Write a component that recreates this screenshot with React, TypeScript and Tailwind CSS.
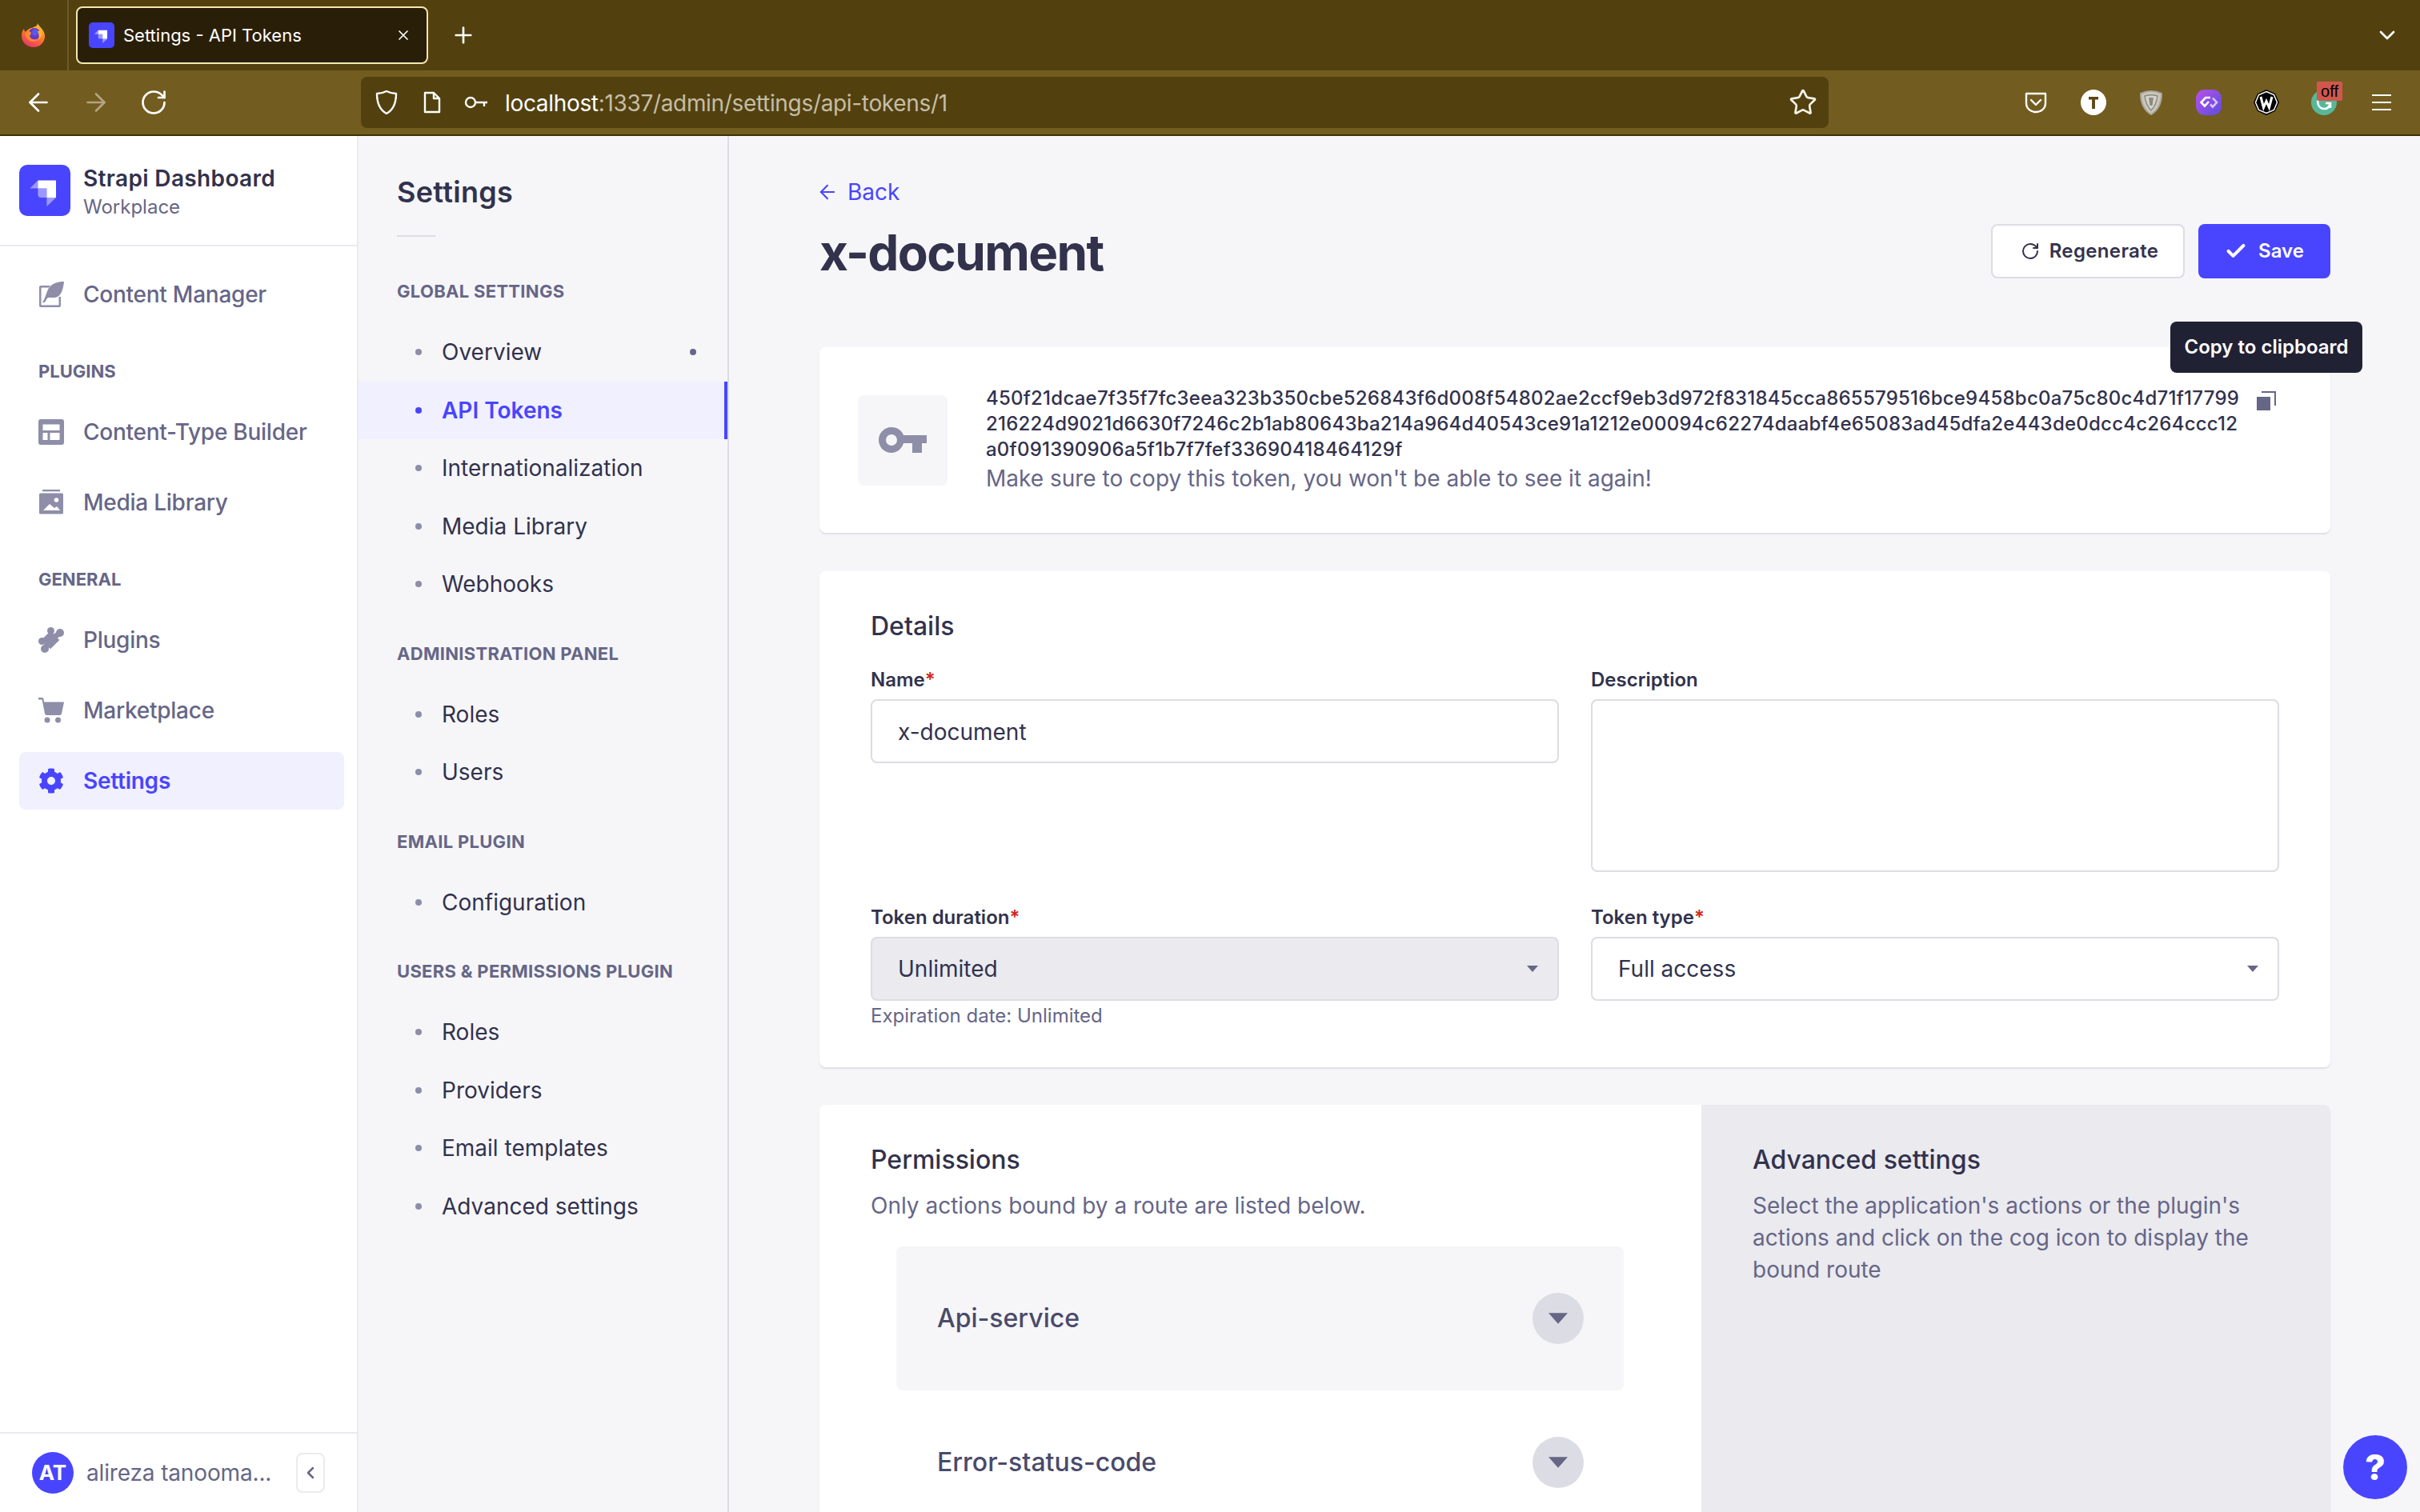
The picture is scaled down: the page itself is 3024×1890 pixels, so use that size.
import { ArrowLeft, ArrowRight, Check, ChevronDown, ChevronLeft, Plus, RotateCw, Star, X } from 'lucide-react';
import type { ReactNode } from 'react';
import { FaCog } from 'react-icons/fa';

const TOKEN_LINES = [
  '450f21dcae7f35f7fc3eea323b350cbe526843f6d008f54802ae2ccf9eb3d972f831845cca865579516bce9458bc0a75c80c4d71f17799',
  '216224d9021d6630f7246c2b1ab80643ba214a964d40543ce91a1212e00094c62274daabf4e65083ad45dfa2e443de0dcc4c264ccc12',
  'a0f091390906a5f1b7f7fef33690418464129f',
];

const SETTINGS_GROUPS = [
  { title: 'Global Settings', items: ['Overview', 'API Tokens', 'Internationalization', 'Media Library', 'Webhooks'] },
  { title: 'Administration Panel', items: ['Roles', 'Users'] },
  { title: 'Email Plugin', items: ['Configuration'] },
  { title: 'Users & Permissions Plugin', items: ['Roles', 'Providers', 'Email templates', 'Advanced settings'] },
];

function StrapiLogo({ className }: { className: string }) {
  return (
    <svg viewBox="0 0 32 32" className={className}>
      <rect width="32" height="32" rx="5" fill="#4945ff" />
      <path d="M11.7 9.700H23V20.500H17.200V14.700H11.700Z" fill="#fff" />
      <path d="M6.700 14.700L11.700 9.700V14.700ZM11.700 14.700H17.200V20.500H13.700A2 2 0 0 1 11.700 18.500Z" fill="#fff" opacity="0.45" />
      <path d="M17.200 20.500H23L17.200 26Z" fill="#fff" opacity="0.45" />
    </svg>
  );
}

function FirefoxLogo() {
  return (
    <svg viewBox="0 0 32 32" className="h-8 w-8">
      <defs>
        <linearGradient id="ff-body" x1="0.8" y1="0" x2="0.3" y2="1">
          <stop offset="0" stopColor="#ffd02e" />
          <stop offset="0.5" stopColor="#ff7a2a" />
          <stop offset="1" stopColor="#e8326e" />
        </linearGradient>
      </defs>
      <path d="M21 1c1 4 9 8 9 16 0 8-6 14-14 14S1 25 1 17c0-4 1-7 3-9 0 2 1 3 2 4 2-3 5-5 8-5 3-2 7-2 7-6z" fill="url(#ff-body)" />
      <circle cx="17" cy="14.500" r="7.500" fill="#6a35d0" />
      <circle cx="18" cy="12.500" r="4" fill="#5a5ae8" />
      <path d="M6 12c3-2 6-1 7 1 0 2-2 3-2 4 1 4 6 6 11 3-2 4-7 5-11 3-4-2-6-7-5-11z" fill="#ff8b2c" />
      <path d="M25 8c2 5 1 11-3 14 1-4 1-8-1-11 2 0 3-1 4-3z" fill="#ffb52e" />
    </svg>
  );
}

function ChromeIcon({ children }: { children: ReactNode }) {
  return <div className="flex h-8 w-[72px] items-center justify-center">{children}</div>;
}

function ExtensionIcons() {
  return (
    <div className="ml-[223px] flex items-center">
      <ChromeIcon>
        <svg viewBox="0 0 32 32" className="h-8 w-8" fill="none" stroke="#fff" strokeWidth="2.4">
          <path d="M4 5h24v12c0 7-6 11-12 11S4 24 4 17z" strokeLinejoin="round" />
          <path d="M10 13l6 6 6-6" strokeLinecap="round" strokeLinejoin="round" />
        </svg>
      </ChromeIcon>
      <ChromeIcon>
        <svg viewBox="0 0 32 32" className="h-8 w-8">
          <circle cx="16" cy="16" r="16" fill="#fff" />
          <path d="M10 9h12v3.4h-4.1V24h-3.8V12.4H10z" fill="#5b4714" />
        </svg>
      </ChromeIcon>
      <ChromeIcon>
        <svg viewBox="0 0 32 32" className="h-8 w-8" fill="none">
          <path d="M3 5c8-4 18-4 26 0 0 10-3 20-13 26C6 25 3 15 3 5z" fill="#c9c6bd" stroke="#a8a59c" strokeWidth="2" />
          <path d="M8 8c5-1.500 11-1.500 16 0-1 7-3 13-8 18-5-5-7-11-8-18z" fill="#d6d3cb" stroke="#8d8a80" strokeWidth="1.500" />
          <path d="M13 10h6l-1.500 10h-3z" fill="#8d8a80" />
        </svg>
      </ChromeIcon>
      <ChromeIcon>
        <svg viewBox="0 0 32 32" className="h-8 w-8">
          <defs>
            <linearGradient id="ext-purple" x1="0" y1="0" x2="1" y2="1">
              <stop offset="0" stopColor="#b84fe8" />
              <stop offset="1" stopColor="#5a4fe0" />
            </linearGradient>
          </defs>
          <rect width="32" height="32" rx="11" fill="url(#ext-purple)" />
          <path d="M18 10H12L6.500 16l4.500 4.500 5-5.500" fill="none" stroke="#fff" strokeWidth="2.600" />
          <path d="M21 10.500L26 16l-5 5.500-3-3" fill="none" stroke="#dcc6f7" strokeWidth="2.600" />
        </svg>
      </ChromeIcon>
      <ChromeIcon>
        <svg viewBox="0 0 32 32" className="h-8 w-8">
          <path d="M16 0L27 5 32 16 27 27 16 32 5 27 0 16 5 5z" fill="#000" />
          <path d="M16 2.500L25.500 6.500 29.500 16 25.500 25.500 16 29.500 6.500 25.500 2.500 16 6.500 6.500z" fill="none" stroke="#fff" strokeWidth="1.500" />
          <path d="M9 9l3.500 13.500 3.500-8 3.500 8L23 9" fill="none" stroke="#fff" strokeWidth="3" />
        </svg>
      </ChromeIcon>
      <ChromeIcon>
        <div className="relative h-8 w-8">
          <svg viewBox="0 0 32 32" className="h-8 w-8">
            <circle cx="16" cy="16" r="16" fill="#56b898" />
            <path d="M9 11c-2 6 0 13 8 13 3 0 5-2 6-5M18 17h6v6" fill="none" stroke="#fff" strokeWidth="2.600" />
          </svg>
          <div className="absolute left-[7px] top-[-10px] flex h-6 w-8 items-center justify-center rounded-[2px] bg-[#d0574e] text-[20px] leading-none text-black [font-family:'Liberation_Sans',sans-serif]">
            off
          </div>
        </div>
      </ChromeIcon>
      <ChromeIcon>
        <div className="flex w-6 flex-col gap-[7px]">
          <div className="h-[2px] bg-white" />
          <div className="h-[2px] bg-white" />
          <div className="h-[2px] bg-white" />
        </div>
      </ChromeIcon>
    </div>
  );
}

function BrowserChrome() {
  return (
    <div className="shrink-0">
      <div className="flex h-[88px] items-center bg-[#52410f]">
        <div className="flex h-full w-[86px] items-center justify-center border-r-2 border-[#6e5a2a]">
          <FirefoxLogo />
        </div>
        <div className="ml-[9px] flex h-[72px] w-[440px] items-center rounded-lg border-2 border-[#f5e8ad] bg-[#291f08] pl-[14px] pr-[19px]">
          <StrapiLogo className="h-8 w-8 shrink-0" />
          <span className="ml-[11px] text-[22px] text-white">Settings - API Tokens</span>
          <X className="ml-auto h-5 w-5 text-white" strokeWidth={2} />
        </div>
        <Plus className="ml-[28px] h-8 w-8 text-white" strokeWidth={2} />
        <ChevronDown className="ml-auto mr-[25px] h-8 w-8 text-white" strokeWidth={2} />
      </div>
      <div className="flex h-[82px] items-start border-b-2 border-[#3d300b] bg-[#735c20] pl-[30px] pt-2">
        <div className="flex h-16 items-center gap-[36px]">
          <ArrowLeft className="h-9 w-9 text-white" strokeWidth={1.8} />
          <ArrowRight className="h-9 w-9 text-[#b3a582]" strokeWidth={1.8} />
          <RotateCw className="h-9 w-9 text-white" strokeWidth={1.8} />
        </div>
        <div className="ml-[241px] flex h-16 w-[1834px] items-center rounded-lg bg-[#52410f] pl-[17px] pr-[14px]">
          <svg viewBox="0 0 30 32" className="h-8 w-[30px]" fill="none" stroke="#fff" strokeWidth="2.400">
            <path d="M15 2c4 2 8 3 12 3 0 11-3 20-12 25C6 25 3 16 3 5c4 0 8-1 12-3z" strokeLinejoin="round" />
          </svg>
          <svg viewBox="0 0 24 30" className="ml-[30px] h-[30px] w-6" fill="none" stroke="#fff" strokeWidth="2.400">
            <path d="M3 3h11l7 7v17H3zM14 3v7h7" strokeLinejoin="round" />
          </svg>
          <svg viewBox="0 0 30 18" className="ml-[28px] h-[18px] w-[30px]" fill="none" stroke="#fff" strokeWidth="2.400">
            <circle cx="8" cy="9" r="6" />
            <path d="M14 9h15M25 9v5" />
          </svg>
          <span className="ml-[21px] pt-[2px] text-[28px] tracking-[-0.33px] text-white">
            localhost<span className="text-[#c6bda5]">:1337/admin/settings/api-tokens/1</span>
          </span>
          <Star className="ml-auto h-9 w-9 text-[#f4f1e6]" strokeWidth={1.8} />
        </div>
        <div className="h-16 flex items-center">
          <ExtensionIcons />
        </div>
      </div>
    </div>
  );
}

function NavItem({ icon, label, active }: { icon: ReactNode; label: string; active?: boolean }) {
  return (
    <div className={`flex h-[72px] w-[406px] items-center rounded-lg pl-6 ${active ? 'bg-[#f0f0ff] text-[#4945ff]' : 'text-[#666687]'}`}>
      <div className={`flex h-8 w-8 items-center justify-center ${active ? 'text-[#4945ff]' : 'text-[#8e8ea9]'}`}>{icon}</div>
      <span className={`ml-[24px] text-[28px] tracking-[-0.25px] ${active ? 'font-semibold' : 'font-medium'}`}>{label}</span>
    </div>
  );
}

function MainNav() {
  return (
    <aside className="flex w-[448px] shrink-0 flex-col border-r-2 border-[#eaeaef] bg-white">
      <div className="flex h-[138px] shrink-0 items-center border-b-2 border-[#eaeaef] pl-6">
        <StrapiLogo className="h-16 w-16" />
        <div className="ml-4 pt-1">
          <div className="text-[28px] font-semibold leading-[36px] tracking-[0.35px] text-[#32324d]">Strapi Dashboard</div>
          <div className="text-[24px] leading-[35px] text-[#666687]">Workplace</div>
        </div>
      </div>
      <nav className="flex-1 px-6 pt-6">
        <NavItem
          label="Content Manager"
          icon={
            <svg viewBox="0 0 32 32" className="h-8 w-8" fill="currentColor">
              <path d="M15 5H3a2 2 0 0 0-2 2v23a2 2 0 0 0 2 2h23a2 2 0 0 0 2-2V19h-2.500v10.500h-22v-22H13z" />
              <path d="M32 0C24 0 15 2 11 12 9 18 7 23 5 26h3c1-2 2-4 4-6h8c8 0 11-10 12-20z" />
            </svg>
          }
        />
        <div className="mb-[28px] mt-[48px] pl-6 text-[22px] font-bold uppercase leading-[24px] text-[#666687]">Plugins</div>
        <div className="flex flex-col gap-4">
          <NavItem
            label="Content-Type Builder"
            icon={
              <svg viewBox="0 0 32 32" className="h-8 w-8">
                <rect width="32" height="32" rx="3" fill="currentColor" />
                <path d="M5.500 6.500H26.500V14H5.500zM5.500 17H11.500V26H5.500zM14.500 17H26.500V26H14.500z" fill="#fff" />
              </svg>
            }
          />
          <NavItem
            label="Media Library"
            icon={
              <svg viewBox="0 0 32 32" className="h-8 w-8">
                <rect x="5" width="22" height="2.300" fill="currentColor" />
                <rect x="1" y="4.500" width="30" height="26" rx="1.500" fill="currentColor" />
                <circle cx="22.500" cy="13" r="2.800" fill="#fff" />
                <path d="M6 26l8-8 6 5 3-2 4 5z" fill="#fff" />
              </svg>
            }
          />
        </div>
        <div className="mb-[28px] mt-[48px] pl-6 text-[22px] font-bold uppercase leading-[24px] text-[#666687]">General</div>
        <div className="flex flex-col gap-4">
          <NavItem
            label="Plugins"
            icon={
              <svg viewBox="0 0 32 32" className="h-8 w-8" fill="currentColor">
                <circle cx="15.500" cy="4.500" r="4.500" />
                <circle cx="27" cy="7" r="5" />
                <circle cx="4.500" cy="17.500" r="4.500" />
                <circle cx="8" cy="27" r="5" />
                <rect x="7" y="8" width="16" height="16" transform="rotate(45 15 16)" />
                <path d="M15 16L27 7M15 16L8 27" stroke="currentColor" strokeWidth="7" />
              </svg>
            }
          />
          <NavItem
            label="Marketplace"
            icon={
              <svg viewBox="0 0 32 32" className="h-8 w-8" fill="currentColor">
                <path d="M0 0h4.500a2 2 0 0 1 2 1.600L7 5.500h25l-3 14.500a2.500 2.500 0 0 1-2.500 2H10.500a2.500 2.500 0 0 1-2.500-2L4.500 2.500H0z" />
                <ellipse cx="11" cy="28" rx="3.500" ry="3.500" />
                <ellipse cx="24.500" cy="28" rx="3.500" ry="3.500" />
              </svg>
            }
          />
          <NavItem label="Settings" active icon={<FaCog className="h-8 w-8" />} />
        </div>
      </nav>
      <div className="flex h-[100px] shrink-0 items-center border-t-2 border-[#eaeaef] pl-10">
        <div className="flex h-[52px] w-[52px] items-center justify-center rounded-full bg-[#4945ff] text-[26px] font-bold leading-none text-white">AT</div>
        <span className="ml-4 w-[232px] whitespace-nowrap text-[28px] tracking-[-0.15px] text-[#666687]">alireza tanooma...</span>
        <div className="ml-[30px] flex h-[50px] w-9 items-center justify-center rounded-lg border-2 border-[#eaeaef]">
          <ChevronLeft className="h-6 w-6 text-[#666687]" strokeWidth={2.5} />
        </div>
      </div>
    </aside>
  );
}

function SettingsNav() {
  return (
    <aside className="w-[463px] shrink-0 border-r-2 border-[#dcdce4] bg-[#f6f6f9]">
      <h2 className="pl-[48px] pt-[50px] text-[36px] font-semibold leading-[40px] tracking-[0.3px] text-[#32324d]">Settings</h2>
      <div className="ml-[48px] mt-[34px] h-[2px] w-12 bg-[#dcdce4]" />
      {SETTINGS_GROUPS.map((group, i) => (
        <div key={group.title} className={i === 0 ? 'mt-[56px]' : 'mt-[38px]'}>
          <div className="mb-[28px] pl-[48px] text-[22px] font-bold uppercase leading-[24px] tracking-[0.3px] text-[#666687]">{group.title}</div>
          {group.items.map((item) => {
            const active = item === 'API Tokens';
            return (
              <div
                key={item}
                className={`flex h-[72.500px] items-center pl-[71px] text-[28px] ${active ? 'border-r-4 border-[#4945ff] bg-[#f0f0ff] font-semibold text-[#4945ff]' : 'text-[#32324d]'}`}
              >
                <div className={`h-2 w-2 rounded-full ${active ? 'bg-[#4945ff]' : 'bg-[#8e8ea9]'}`} />
                <span className="ml-[25px]">{item}</span>
                {item === 'Overview' && <div className="ml-auto mr-[39px] h-2 w-2 rounded-full bg-[#666687]" />}
              </div>
            );
          })}
        </div>
      ))}
    </aside>
  );
}

function Field({ label, required, children }: { label: string; required?: boolean; children: ReactNode }) {
  return (
    <div>
      <div className="mb-2 text-[24px] font-semibold leading-[32px] text-[#32324d]">
        {label}
        {required && <span className="text-[#d02b20]">*</span>}
      </div>
      {children}
    </div>
  );
}

function Caret({ className }: { className: string }) {
  return (
    <svg viewBox="0 0 14 8" className={className} fill="currentColor">
      <path d="M0 0h14L7 8z" />
    </svg>
  );
}

function SelectBox({ value, disabled }: { value: string; disabled?: boolean }) {
  return (
    <div className={`flex h-20 items-center rounded-lg border-2 border-[#dcdce4] pl-8 pr-6 text-[28px] text-[#32324d] ${disabled ? 'bg-[#eaeaef]' : 'bg-white'}`}>
      {value}
      <Caret className="ml-auto h-2 w-[14px] text-[#666687]" />
    </div>
  );
}

function Accordion({ title, shaded }: { title: string; shaded?: boolean }) {
  return (
    <div className={`ml-8 flex h-[180px] w-[909px] items-center justify-between rounded-lg pl-[51px] pr-[50px] ${shaded ? 'bg-[#f6f6f9]' : ''}`}>
      <span className="text-[32px] font-medium text-[#4a4a6a]">{title}</span>
      <div className="flex h-16 w-16 items-center justify-center rounded-full bg-[#dcdce4]">
        <Caret className="h-[14px] w-[24px] text-[#666687]" />
      </div>
    </div>
  );
}

function TokenPage() {
  return (
    <main className="relative min-w-0 flex-1 overflow-hidden bg-[#f6f6f9] pl-[113px] pr-[112px]">
      <div className="mt-[50px] flex h-[38px] items-center pt-[2px] text-[28px] text-[#4945ff]">
        <ArrowLeft className="-ml-1 mr-[11px] h-7 w-7" strokeWidth={1.8} />
        Back
      </div>
      <div className="mt-[22px] flex h-[68px] items-center justify-between">
        <h1 className="pt-1 text-[62px] font-bold leading-none tracking-[-1.6px] text-[#32324d]">x-document</h1>
        <div className="flex gap-[17px]">
          <button className="flex h-[68px] w-[242px] items-center justify-center rounded-lg border-2 border-[#dcdce4] bg-white pl-1 text-[24px] font-semibold tracking-[0.35px] text-[#32324d]">
            <RotateCw className="mr-[12px] h-6 w-6" strokeWidth={2} />
            Regenerate
          </button>
          <button className="flex h-[68px] w-[165px] items-center justify-center rounded-lg bg-[#4945ff] text-[24px] font-semibold text-white">
            <Check className="mr-[14px] h-7 w-7" strokeWidth={3.5} />
            Save
          </button>
        </div>
      </div>

      <section className="mt-[86px] flex h-[232px] items-center rounded-lg bg-white pl-12 shadow-[0_2px_2px_rgba(33,33,52,0.1)]">
        <div className="flex h-[113px] w-28 shrink-0 items-center justify-center rounded-lg bg-[#f6f6f9]">
          <svg viewBox="0 0 60 32" className="h-8 w-[60px]">
            <path fillRule="evenodd" fill="#8e8ea9" d="M16 0c7 0 13 4 15 10h29v10h-6v12H42V20H31c-2 7-8 12-15 12C7 32 0 25 0 16S7 0 16 0zm0 9a7 7 0 1 0 0 14 7 7 0 0 0 0-14z" />
          </svg>
        </div>
        <div className="ml-12 w-[1564px] shrink-0">
          {TOKEN_LINES.map((line) => (
            <div key={line} className="whitespace-nowrap text-[24px] font-medium leading-[32px] tracking-[0.23px] text-[#32324d]">
              {line}
            </div>
          ))}
          <div className="text-[28px] leading-[40px] text-[#666687]">Make sure to copy this token, you won't be able to see it again!</div>
        </div>
        <svg viewBox="0 0 24 24" className="mb-[98px] ml-6 h-6 w-6 shrink-0" fill="#666687">
          <path d="M0 7h17v17H0z" />
          <path d="M6 0h18v18h-2V2H6z" />
        </svg>
      </section>

      <section className="mt-[48px] rounded-lg bg-white px-16 pb-[48px] pt-[49px] shadow-[0_2px_2px_rgba(33,33,52,0.1)]">
        <h3 className="text-[32px] font-medium leading-[40px] text-[#32324d]">Details</h3>
        <div className="mt-[31px] grid grid-cols-[860px_860px] gap-x-10 gap-y-[41px]">
          <Field label="Name" required>
            <div className="flex h-20 items-center rounded-lg border-2 border-[#dcdce4] bg-white pl-8 pt-[2px] text-[28px] text-[#32324d]">x-document</div>
          </Field>
          <Field label="Description">
            <div className="h-[216px] rounded-lg border-2 border-[#dcdce4] bg-white" />
          </Field>
          <Field label="Token duration" required>
            <SelectBox value="Unlimited" disabled />
            <div className="mt-[3px] text-[24px] leading-[32px] text-[#666687]">Expiration date: Unlimited</div>
          </Field>
          <Field label="Token type" required>
            <SelectBox value="Full access" />
          </Field>
        </div>
      </section>

      <section className="mt-[47px] flex h-[600px] rounded-lg bg-white shadow-[0_2px_2px_rgba(33,33,52,0.1)]">
        <div className="w-[1102px] shrink-0 pl-16 pt-[49px]">
          <h3 className="text-[32px] font-medium leading-[40px] text-[#32324d]">Permissions</h3>
          <p className="mb-[31px] mt-[17px] text-[28px] leading-[40px] text-[#666687]">Only actions bound by a route are listed below.</p>
          <Accordion title="Api-service" shaded />
          <Accordion title="Error-status-code" />
        </div>
        <div className="flex-1 rounded-r-lg bg-[#eaeaef] pl-16 pr-[60px] pt-[49px]">
          <h3 className="text-[32px] font-medium leading-[40px] text-[#32324d]">Advanced settings</h3>
          <p className="mt-[17px] text-[28px] leading-[40px] text-[#666687]">
            Select the application's actions or the plugin's actions and click on the cog icon to display the bound route
          </p>
        </div>
      </section>

      {/* tooltip over the token card */}
      <div className="absolute left-[1801px] top-[232px] flex h-16 w-[240px] items-center justify-center rounded-lg bg-[#212134] text-[24px] font-semibold text-white">
        Copy to clipboard
      </div>
      <div className="absolute left-[2017px] top-[1624px] flex h-20 w-20 items-center justify-center rounded-full bg-[#4945ff] text-[44px] font-extrabold leading-none text-white">
        ?
      </div>
    </main>
  );
}

export default function App() {
  return (
    <div className="flex h-[1890px] w-[3024px] flex-col overflow-hidden [font-family:Inter,sans-serif]">
      <BrowserChrome />
      <div className="flex min-h-0 flex-1">
        <MainNav />
        <SettingsNav />
        <TokenPage />
      </div>
    </div>
  );
}
